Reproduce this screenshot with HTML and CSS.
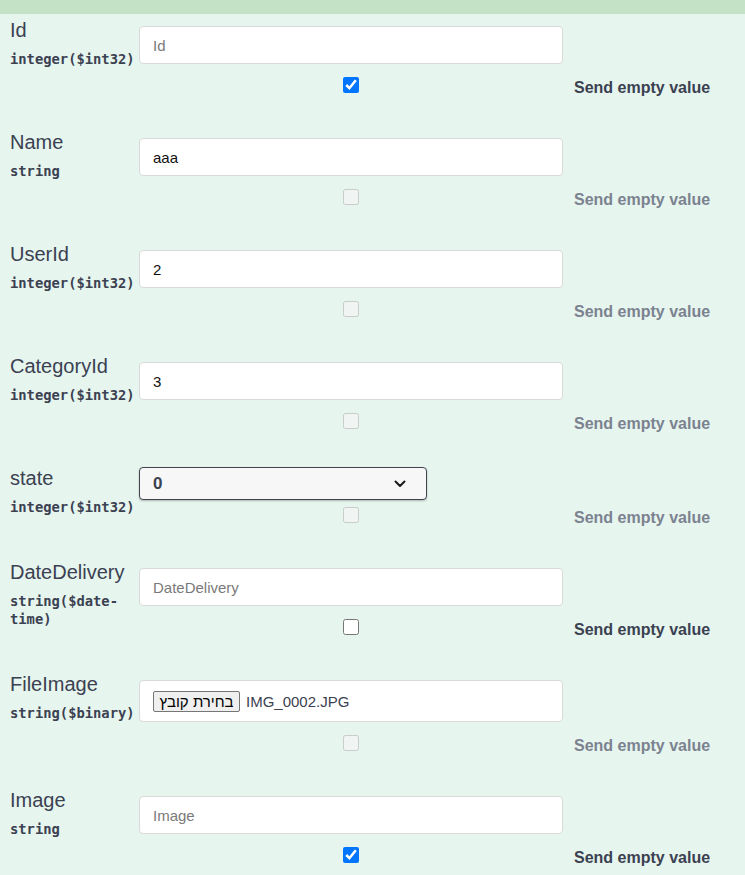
FILE: index.html
```html
<!DOCTYPE html>
<html lang="en">
<head>
<meta charset="utf-8">
<title>Parameters</title>
<link rel="stylesheet" href="styles.css">
</head>
<body>
<div class="topbar"></div>
<div class="params">
  <div class="param">
    <div class="name-col"><div class="pname">Id</div><div class="ptype">integer($int32)</div></div>
    <div class="desc-col">
      <input class="text-input" type="text" placeholder="Id">
      <div class="empty-row"><span class="cb-cell"><input type="checkbox" checked></span><span class="empty-label">Send empty value</span></div>
    </div>
  </div>
  <div class="param">
    <div class="name-col"><div class="pname">Name</div><div class="ptype">string</div></div>
    <div class="desc-col">
      <input class="text-input" type="text" placeholder="Name" value="aaa">
      <div class="empty-row"><span class="cb-cell"><input type="checkbox" disabled></span><span class="empty-label disabled">Send empty value</span></div>
    </div>
  </div>
  <div class="param">
    <div class="name-col"><div class="pname">UserId</div><div class="ptype">integer($int32)</div></div>
    <div class="desc-col">
      <input class="text-input" type="text" placeholder="UserId" value="2">
      <div class="empty-row"><span class="cb-cell"><input type="checkbox" disabled></span><span class="empty-label disabled">Send empty value</span></div>
    </div>
  </div>
  <div class="param">
    <div class="name-col"><div class="pname">CategoryId</div><div class="ptype">integer($int32)</div></div>
    <div class="desc-col">
      <input class="text-input" type="text" placeholder="CategoryId" value="3">
      <div class="empty-row"><span class="cb-cell"><input type="checkbox" disabled></span><span class="empty-label disabled">Send empty value</span></div>
    </div>
  </div>
  <div class="param">
    <div class="name-col"><div class="pname">state</div><div class="ptype">integer($int32)</div></div>
    <div class="desc-col">
      <div class="select-wrap">
        <select class="select"><option>0</option></select>
        <svg class="chevron" width="12" height="8" viewBox="0 0 12 8"><path d="M1.5 1.5 L6 6 L10.5 1.5" fill="none" stroke="#1a1a1a" stroke-width="2" stroke-linecap="round" stroke-linejoin="round"/></svg>
      </div>
      <div class="empty-row"><span class="cb-cell"><input type="checkbox" disabled></span><span class="empty-label disabled">Send empty value</span></div>
    </div>
  </div>
  <div class="param">
    <div class="name-col"><div class="pname">DateDelivery</div><div class="ptype">string($date-time)</div></div>
    <div class="desc-col">
      <input class="text-input" type="text" placeholder="DateDelivery">
      <div class="empty-row"><span class="cb-cell"><input type="checkbox"></span><span class="empty-label">Send empty value</span></div>
    </div>
  </div>
  <div class="param">
    <div class="name-col"><div class="pname">FileImage</div><div class="ptype">string($binary)</div></div>
    <div class="desc-col">
      <div class="file-input"><button class="file-btn" type="button">בחירת קובץ</button><span class="file-name">IMG_0002.JPG</span></div>
      <div class="empty-row"><span class="cb-cell"><input type="checkbox" disabled></span><span class="empty-label disabled">Send empty value</span></div>
    </div>
  </div>
  <div class="param">
    <div class="name-col"><div class="pname">Image</div><div class="ptype">string</div></div>
    <div class="desc-col">
      <input class="text-input" type="text" placeholder="Image">
      <div class="empty-row"><span class="cb-cell"><input type="checkbox" checked></span><span class="empty-label">Send empty value</span></div>
    </div>
  </div>
</div>
</body>
</html>
```
FILE: styles.css
```css
html, body {
  margin: 0;
  padding: 0;
}
body {
  background: #e6f5ee;
  font-family: "Liberation Sans", Arial, sans-serif;
  color: #3b4151;
  height: 875px;
  overflow: hidden;
}
.topbar {
  height: 14px;
  background: #c4e2c6;
}
.params {
  padding-top: 5px;
}
.param {
  display: grid;
  grid-template-columns: 129px 1fr;
  padding-left: 10px;
  padding-bottom: 38px;
}
.pname {
  font-size: 20px;
  line-height: 23px;
  color: #3b4151;
}
.ptype {
  margin-top: 8px;
  font-family: "DejaVu Sans Mono", monospace;
  font-weight: 700;
  font-size: 13.8px;
  line-height: 18px;
  color: #3b4151;
}
.desc-col {
  display: flex;
  flex-direction: column;
  align-items: flex-start;
}
.text-input {
  box-sizing: border-box;
  width: 424px;
  height: 38px;
  margin: 7px 0 13px;
  padding: 0 13px;
  border: 1px solid #d9d9d9;
  border-radius: 4px;
  background: #fff;
  font-family: "Liberation Sans", Arial, sans-serif;
  font-size: 15px;
  color: #111;
  outline: none;
}
.text-input::placeholder {
  color: #7a7a7a;
}
.select-wrap {
  position: relative;
  width: 288px;
  height: 33px;
  margin: 0 0 7px;
}
.select {
  box-sizing: border-box;
  width: 288px;
  height: 33px;
  appearance: none;
  -webkit-appearance: none;
  border: 1.5px solid #41444e;
  border-radius: 4px;
  background: #f7f7f7;
  box-shadow: 0 1px 2px 0 rgba(0, 0, 0, 0.25);
  padding: 0 40px 0 13px;
  font-family: "Liberation Sans", Arial, sans-serif;
  font-weight: 700;
  font-size: 17px;
  color: #3b4151;
}
.chevron {
  position: absolute;
  right: 21px;
  top: 13px;
}
.file-input {
  box-sizing: border-box;
  width: 424px;
  height: 42px;
  margin: 7px 0 13px;
  padding: 0 13px;
  border: 1px solid #d9d9d9;
  border-radius: 4px;
  background: #fff;
  display: flex;
  align-items: center;
  gap: 6px;
}
.file-btn {
  box-sizing: border-box;
  width: 87px;
  height: 21px;
  padding: 0;
  border: 1px solid #767676;
  border-radius: 2px;
  background: #efefef;
  font-family: "Liberation Sans", Arial, sans-serif;
  font-size: 15px;
  color: #000;
  line-height: 19px;
}
.file-name {
  font-size: 15px;
  color: #3b4151;
}
.empty-row {
  display: flex;
  align-items: center;
  height: 16px;
}
.cb-cell {
  width: 424px;
  display: flex;
  justify-content: center;
}
.cb-cell input {
  width: 16px;
  height: 16px;
  margin: 0;
}
.empty-label {
  margin-left: 11px;
  margin-top: 6px;
  font-weight: 700;
  font-size: 16px;
  line-height: 18px;
  color: #3b4151;
  white-space: nowrap;
}
.empty-label.disabled {
  color: #7c8290;
}
```
